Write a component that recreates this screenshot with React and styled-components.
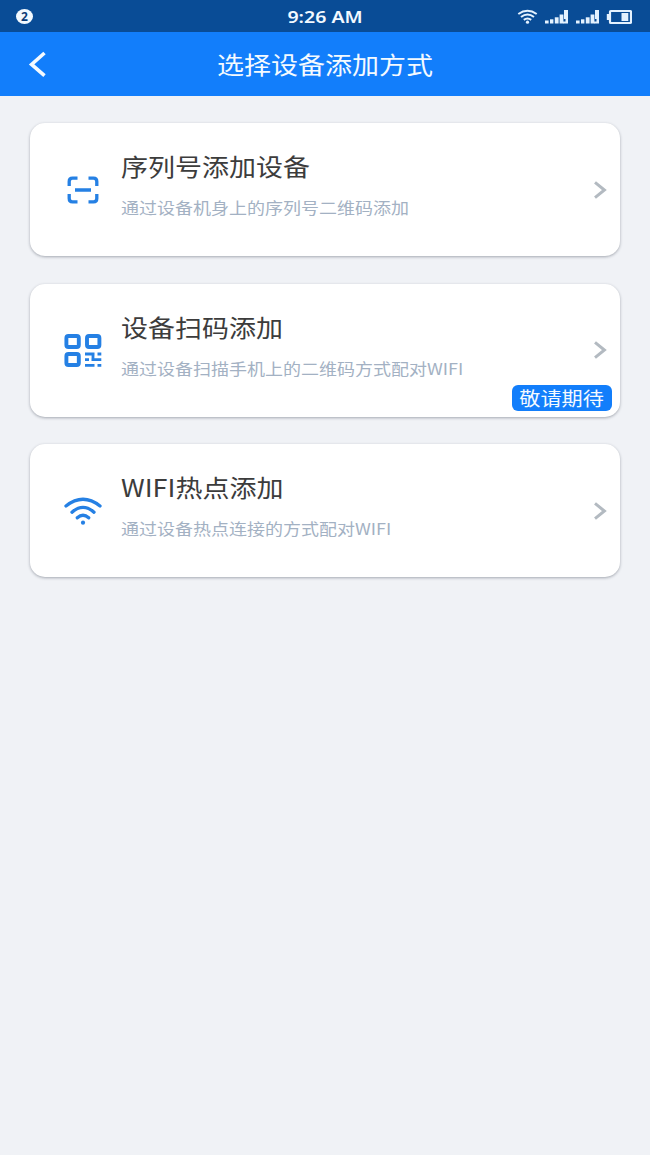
import React from "react";
import styled, { createGlobalStyle } from "styled-components";

const GlobalStyle = createGlobalStyle`
  * { box-sizing: border-box; }
  body {
    margin: 0;
    background: #f0f2f6;
    font-family: "Noto Sans CJK SC", sans-serif;
  }
`;

const Screen = styled.div`
  width: 650px;
  min-height: 1155px;
  display: flex;
  flex-direction: column;
  background: #f0f2f6;
`;

const StatusBar = styled.div`
  height: 32px;
  padding: 0 18px 0 16px;
  display: grid;
  grid-template-columns: 1fr auto 1fr;
  align-items: center;
  background: #094c96;
  color: #f2f9ff;
`;

const BackIcon = styled.svg`
  display: block;
`;

const Clock = styled.span`
  font: 600 16px/32px "Noto Sans", sans-serif;
  padding: 1px 0 0 2px;
  transform: scaleX(1.22);
`;

const StatusIcons = styled.div`
  display: flex;
  justify-content: flex-end;
  align-items: center;
`;

const Header = styled.header`
  height: 64px;
  padding: 0 28px;
  display: grid;
  grid-template-columns: 60px 1fr 60px;
  align-items: center;
  background: #127efb;
  color: #f4faff;
`;

const HeaderTitle = styled.h1`
  margin: 0;
  text-align: center;
  font-size: 24px;
  font-weight: 400;
  line-height: 64px;
  transform: scaleX(1.125);
`;

const List = styled.main`
  padding: 27px 30px;
  display: flex;
  flex-direction: column;
  gap: 27.5px;
`;

const Card = styled.section`
  position: relative;
  height: 133px;
  padding: 0 13px 0 33px;
  display: grid;
  grid-template-columns: 40px 1fr 14px;
  column-gap: 18px;
  border-radius: 15px;
  background: #fff;
  box-shadow: 0 1px 3px rgba(40, 48, 64, 0.38);
`;

const CardIcon = styled.svg`
  align-self: center;
  display: block;
`;

const CardText = styled.div`
  padding-top: 24px;
  white-space: nowrap;
`;

const CardTitle = styled.h2`
  margin: 0;
  color: #3c3c3c;
  font-size: 24px;
  font-weight: 400;
  line-height: 38px;
  transform: scaleX(1.125);
  transform-origin: left;
`;

const CardHint = styled.p`
  margin: 9px 0 0;
  color: #a3b1c3;
  font-size: 16px;
  line-height: 26px;
  transform: scaleX(1.125);
  transform-origin: left;
`;

const Badge = styled.span`
  position: absolute;
  right: 8px;
  bottom: 6px;
  width: 100px;
  height: 26px;
  border-radius: 6px;
  display: flex;
  align-items: center;
  justify-content: center;
  background: #127efb;
  color: #f4faff;
`;

const BadgeText = styled.span`
  font-size: 18.8px;
  line-height: 26px;
  white-space: nowrap;
  transform: scaleX(1.125);
`;

const ScanIcon = () => (
  <CardIcon width="40" height="40" viewBox="0 0 40 40" fill="none" stroke="#2580e4" strokeWidth="3.3">
    <path d="M6.2 16V11.5Q6.2 8.2 9.5 8.2H14.5M25.5 8.2H30.5Q33.8 8.2 33.8 11.5V16M33.8 24V28.5Q33.8 31.8 30.5 31.8H25.5M14.5 31.8H9.5Q6.2 31.8 6.2 28.5V24M12 20H28" />
  </CardIcon>
);

const QrIcon = () => (
  <CardIcon width="40" height="40" viewBox="0 0 40 40" fill="none" stroke="#2580e4" strokeWidth="3.9">
    <rect x="3.4" y="6" width="12.4" height="11" rx="2" />
    <rect x="24" y="6" width="12.4" height="11" rx="2" />
    <rect x="3.4" y="24" width="12.4" height="11" rx="2" />
    <path strokeWidth="2.8" d="M22 24H31.5M34.5 24H38.3M22 29.6H26M28.5 29.6H38.3M22 35.4H31.5M34.5 35.4H38.3M30 24V29.6" />
  </CardIcon>
);

const WifiIcon = () => (
  <CardIcon width="40" height="40" viewBox="0 0 40 40" fill="none" stroke="#2580e4" strokeWidth="3.3" strokeLinecap="round">
    <path d="M3 15Q20 1.5 37 15M9 21.2Q20 11.6 31 21.2M14.3 26.8Q20 21.6 25.7 26.8" />
    <circle cx="20" cy="31.7" r="2.1" fill="#2580e4" stroke="none" />
  </CardIcon>
);

const Arrow = () => (
  <CardIcon width="14" height="20" viewBox="0 0 14 20" fill="none" stroke="#b3bac1" strokeWidth="3">
    <path d="M2 2.4L11.4 10L2 17.6" />
  </CardIcon>
);

const Indicators = () => (
  <svg width="116" height="20" viewBox="516 6 116 20" fill="none" stroke="#e4f2ff">
    <path strokeWidth="2" d="M518.3 13Q527.5 6.6 536.7 13M521 16Q527.5 11 534 16M523.8 18.9Q527.5 16 531.2 18.9" />
    <circle cx="527.5" cy="21.2" r="1.6" fill="#e4f2ff" stroke="none" />
    {[545, 576].map((x) => (
      <g key={x} fill="#e4f2ff" stroke="none">
        <rect x={x} y="19.5" width="3.6" height="3" />
        <rect x={x + 5} y="18.3" width="3.4" height="4.2" />
        <rect x={x + 9.8} y="16.3" width="3.8" height="6.2" />
        <rect x={x + 14.6} y="13.5" width="3.8" height="9" />
        <path d={`M${x + 19} 9H${x + 23}V22.5H${x + 18}V20.5H${x + 20.5}V18H${x + 19}Z`} />
      </g>
    ))}
    <rect x="610" y="10" width="21" height="12" rx="0.8" strokeWidth="2.2" />
    <path strokeWidth="2.4" d="M608 13V19" />
    <rect x="621.5" y="12" width="6.8" height="8" fill="#e4f2ff" stroke="none" />
  </svg>
);

const methods = [
  { title: "序列号添加设备", hint: "通过设备机身上的序列号二维码添加", Icon: ScanIcon },
  { title: "设备扫码添加", hint: "通过设备扫描手机上的二维码方式配对WIFI", Icon: QrIcon, badge: "敬请期待" },
  { title: "WIFI热点添加", hint: "通过设备热点连接的方式配对WIFI", Icon: WifiIcon },
];

const NoticeCount = styled.span`
  width: 17px;
  height: 15px;
  border-radius: 50%;
  background: #f2f9ff;
  color: #0b3c78;
  font: 700 12px/15px "Noto Sans", sans-serif;
  text-align: center;
`;

export default function App() {
  return (
    <>
      <GlobalStyle />
      <Screen>
        <StatusBar>
          <NoticeCount>2</NoticeCount>
          <Clock>9:26 AM</Clock>
          <StatusIcons>
            <Indicators />
          </StatusIcons>
        </StatusBar>
        <Header>
          <BackIcon width="20" height="28" viewBox="0 0 20 28" fill="none" stroke="#f4faff" strokeWidth="3.6">
            <path d="M16.5 3L3.6 14.4L16.5 25.6" />
          </BackIcon>
          <HeaderTitle>选择设备添加方式</HeaderTitle>
        </Header>
        <List>
          {methods.map(({ title, hint, Icon, badge }) => (
            <Card key={title}>
              <Icon />
              <CardText>
                <CardTitle>{title}</CardTitle>
                <CardHint>{hint}</CardHint>
              </CardText>
              <Arrow />
              {badge && (
                <Badge>
                  <BadgeText>{badge}</BadgeText>
                </Badge>
              )}
            </Card>
          ))}
        </List>
      </Screen>
    </>
  );
}
